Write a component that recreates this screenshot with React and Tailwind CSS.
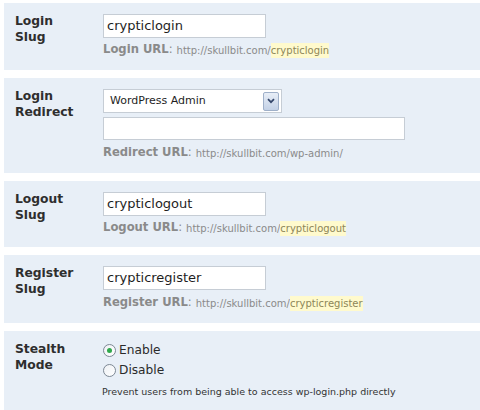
const Url = ({ label, slug, base = 'http://skullbit.com/' }) => (
  <div className="h-[16px] flex items-center whitespace-nowrap text-[#8a8a8a]">
    <span className="text-[11.6px] font-bold">{label} URL</span>
    <span className="text-[11.6px] mr-[4px]">:</span>
    <span className="text-[10px]">{base}</span>
    {slug && <span className="text-[10px] bg-[#fffacd] text-[#8d8658]">{slug}</span>}
  </div>
)

const Panel = ({ title, children, className = '' }) => (
  <div className={`flex bg-[#e8eff7] pl-[11px] pt-[11px] ${className}`}>
    <div className="w-[88px] shrink-0 -mt-px text-[12.3px] leading-[16px] font-bold text-[#2e2e2e]">
      {title.map((t) => (
        <div key={t}>{t}</div>
      ))}
    </div>
    <div className="flex flex-col">{children}</div>
  </div>
)

const TextBox = ({ value = '', w = 'w-[163px]', h = 'h-[24px]' }) => (
  <div
    className={`${w} ${h} bg-white border border-[#c6cdd5] px-[3px] flex items-center text-[13px] text-[#1e1e1e]`}
  >
    {value}
  </div>
)

const Radio = ({ checked, label }) => (
  <div className="h-[16px] flex items-center gap-[3px]">
    <span className="w-[13px] h-[13px] rounded-full border border-[#7d8894] bg-gradient-to-br from-[#eef1f4] to-white flex items-center justify-center">
      {checked && <span className="w-[5px] h-[5px] rounded-full bg-[#2fa84b]" />}
    </span>
    <span className="text-[12.2px] text-[#2a2a2a]">{label}</span>
  </div>
)

export default function App() {
  return (
    <div className="w-[480px] h-[410px] overflow-hidden bg-white pt-[3px] pl-[4px] flex flex-col gap-[8px] font-['DejaVu_Sans',sans-serif]">
      <Panel title={['Login', 'Slug']} className="pb-[12px]">
        <TextBox value="crypticlogin" />
        <div className="mt-[4px]">
          <Url label="Login" slug="crypticlogin" />
        </div>
      </Panel>

      <Panel title={['Login', 'Redirect']} className="pb-[12px]">
        <div className="w-[179px] h-[24px] bg-white border border-[#c6cdd5] flex items-center justify-between pl-[6px] pr-[2px]">
          <span className="text-[11px] text-[#1e1e1e]">WordPress Admin</span>
          <span className="w-[16px] h-[19px] border border-[#9fb0c9] rounded-[2px] bg-gradient-to-b from-[#e8eef7] to-[#c3d1e6] flex items-center justify-center">
            <svg width="8" height="6" viewBox="0 0 8 6">
              <path d="M1 1.2 L4 4.2 L7 1.2" fill="none" stroke="#34466a" strokeWidth="1.7" />
            </svg>
          </span>
        </div>
        <div className="mt-[4px]">
          <TextBox w="w-[302px]" h="h-[23px]" />
        </div>
        <div className="mt-[5px]">
          <Url label="Redirect" base="http://skullbit.com/wp-admin/" />
        </div>
      </Panel>

      <Panel title={['Logout', 'Slug']} className="pb-[11px]">
        <TextBox value="crypticlogout" />
        <div className="mt-[4px]">
          <Url label="Logout" slug="crypticlogout" />
        </div>
      </Panel>

      <Panel title={['Register', 'Slug']} className="pb-[12px]">
        <TextBox value="crypticregister" />
        <div className="mt-[5px]">
          <Url label="Register" slug="crypticregister" />
        </div>
      </Panel>

      <Panel title={['Stealth', 'Mode']} className="pb-[14px]">
        <Radio checked label="Enable" />
        <div className="mt-[4px]">
          <Radio label="Disable" />
        </div>
        <div className="mt-[7px] h-[14px] flex items-center text-[9.5px] text-[#333] whitespace-nowrap -ml-px">
          Prevent users from being able to access wp-login.php directly
        </div>
      </Panel>
    </div>
  )
}
